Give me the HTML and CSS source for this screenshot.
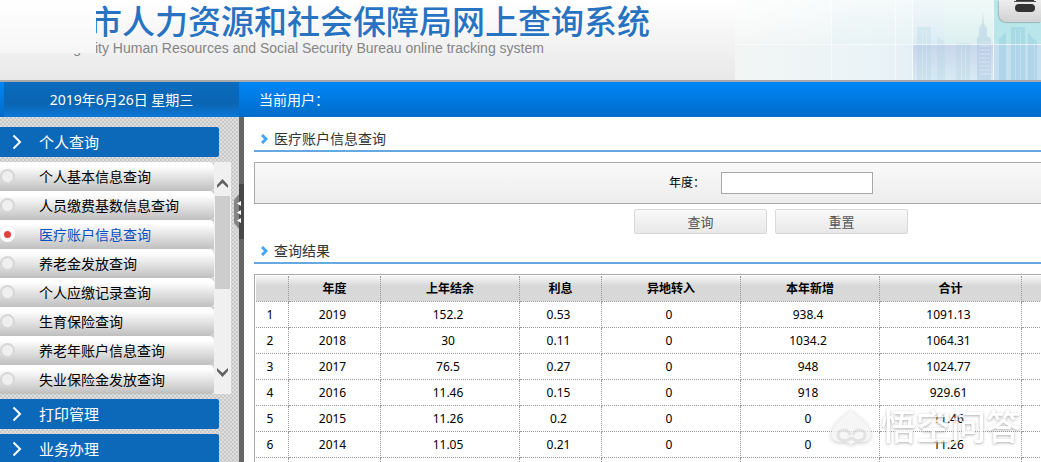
FILE: index.html
```html
<!DOCTYPE html>
<html lang="zh-CN">
<head>
<meta charset="utf-8">
<title>人力资源和社会保障局网上查询系统</title>
<link rel="stylesheet" href="styles.css">
</head>
<body>
<header class="banner">
  <div class="brand">
    <h1 class="brand-title">市人力资源和社会保障局网上查询系统</h1>
    <p class="brand-sub">Nantong City Human Resources and Social Security Bureau online tracking system</p>
    <span class="brand-mask"></span>
  </div>
  <svg class="skyline" width="306" height="80" viewBox="0 0 306 80" aria-hidden="true">
    <defs>
      <linearGradient id="sky" x1="0" x2="1" y1="0" y2="0">
        <stop offset="0" stop-color="#f6f9f8" stop-opacity=".5"/>
        <stop offset=".5" stop-color="#e8f3f5"/>
        <stop offset="1" stop-color="#d3eef2"/>
      </linearGradient>
      <linearGradient id="low" x1="0" x2="1" y1="0" y2="0">
        <stop offset="0" stop-color="#f2f5f4"/>
        <stop offset=".45" stop-color="#eaf3f7"/>
        <stop offset="1" stop-color="#d3e4f0"/>
      </linearGradient>
      <linearGradient id="fade" x1="0" x2="0" y1="0" y2="1">
        <stop offset="0" stop-color="#c9d6ec"/>
        <stop offset="1" stop-color="#d8eaf3"/>
      </linearGradient>
      <linearGradient id="glow" x1="0" x2="0" y1="0" y2="1">
        <stop offset="0" stop-color="#fff" stop-opacity=".6"/>
        <stop offset="1" stop-color="#fff" stop-opacity="0"/>
      </linearGradient>
    </defs>
    <rect width="306" height="44" fill="url(#sky)"/>
    <rect y="44" width="306" height="36" fill="url(#low)"/>
    <rect x="97" width="64" height="44" fill="#e6f1f5" opacity=".6"/>
    <rect x="178" width="31" height="44" fill="#dcecf4"/>
    <rect x="209" width="49" height="44" fill="#dcf0ef"/>
    <rect x="259" width="47" height="44" fill="#b9e6ea"/>
    <rect width="258" height="44" fill="url(#glow)"/>
    <rect x="178" y="45" width="80" height="35" fill="url(#fade)"/>
    <rect x="259" y="45" width="47" height="35" fill="#c5dff0"/>
    <g fill="#a9cfe0" opacity=".25">
      <path d="M182 80V27h14v53zM202 80V36l8 6v38zM221 80V43h14v37z"/>
    </g>
    <path d="M242 80V38l2-2v-8l3-4 1-12 1 12 3 4v8l4 2v42z" fill="#a5c4df" opacity=".4"/>
    <path d="M244 42h11M244 46h11M244 50h11M244 54h11M244 58h11M244 62h11M244 66h11M244 70h11M244 74h11" stroke="#dbe9f4" opacity=".8"/>
    <path d="M264 80V39l7-7v48zM276 80V27h14v53zM293 80V33l9 9v38z" fill="#87c5dc" opacity=".36"/>
    <path d="M187.500 30v50M191.500 30v50M226.500 46v34M230.500 46v34M280.500 30v50M285.500 30v50M299.500 42v38" stroke="#fff" opacity=".25"/>
    <path d="M0 44.500h306M96.500 0v80M160.500 0v80M177.500 0v80M258.500 0v80" stroke="#fff" opacity=".6"/>
  </svg>
  <button class="float-button" type="button" aria-label="工具">
    <svg width="22" height="12" viewBox="0 0 22 12" aria-hidden="true"><path d="M2 0h18v1H2z" fill="#333"/><path d="M0 1h22v1H0z" fill="#555"/><rect x="1" y="4" width="20" height="8" rx="4" fill="#333"/></svg>
  </button>
</header>

<div class="userbar">
  <div class="date">2019年6月26日 星期三</div>
  <div class="user">当前用户：</div>
</div>

<div class="page">
  <nav class="sidebar">
    <button class="group" type="button"><svg class="chevron" viewBox="0 0 10 16"><path d="M1.500 1.500 8 8l-6.500 6.500"/></svg>个人查询</button>
    <div class="submenu">
      <div class="links">
        <a class="link" href="#"><i class="dot"></i>个人基本信息查询</a>
        <a class="link" href="#"><i class="dot"></i>人员缴费基数信息查询</a>
        <a class="link current" href="#"><i class="dot"></i>医疗账户信息查询</a>
        <a class="link" href="#"><i class="dot"></i>养老金发放查询</a>
        <a class="link" href="#"><i class="dot"></i>个人应缴记录查询</a>
        <a class="link" href="#"><i class="dot"></i>生育保险查询</a>
        <a class="link" href="#"><i class="dot"></i>养老年账户信息查询</a>
        <a class="link" href="#"><i class="dot"></i>失业保险金发放查询</a>
      </div>
      <div class="scroll">
        <svg class="arrow" viewBox="0 0 11 9"><path d="M0 9V6l5.500-6L11 6v3L5.500 4z"/></svg>
        <span class="thumb"></span>
        <svg class="arrow" viewBox="0 0 11 9"><path d="M0 0v3l5.500 6L11 3V0L5.500 5z"/></svg>
      </div>
    </div>
    <button class="group" type="button"><svg class="chevron" viewBox="0 0 10 16"><path d="M1.500 1.500 8 8l-6.500 6.500"/></svg>打印管理</button>
    <button class="group" type="button"><svg class="chevron" viewBox="0 0 10 16"><path d="M1.500 1.500 8 8l-6.500 6.500"/></svg>业务办理</button>
  </nav>
  <div class="divider">
    <button class="collapse" type="button" aria-label="收起菜单">
      <svg width="10" height="55" viewBox="0 0 10 55"><path d="M5 10v35l-5-6V16z" fill="#858585"/><path d="M5 0h5v55H5z" fill="#484848"/><path d="M7 17v5l-4-2.500zM7 26v5l-4-2.500zM7 34v5l-4-2.500z" fill="#fff"/></svg>
    </button>
  </div>

  <main class="main">
    <div class="content">
      <h2 class="section"><svg class="mark" viewBox="0 0 7 10"><path d="M1 1l4 4-4 4"/></svg>医疗账户信息查询</h2>
      <form class="query">
        <div class="fields">
          <label class="field-label" for="year">年度：</label>
          <input class="field-input" id="year" type="text">
        </div>
        <div class="actions">
          <button class="action" type="button">查询</button>
          <button class="action" type="reset">重置</button>
        </div>
      </form>
      <h2 class="section"><svg class="mark" viewBox="0 0 7 10"><path d="M1 1l4 4-4 4"/></svg>查询结果</h2>
      <div class="result">
        <table class="grid">
          <colgroup><col class="c-index"><col class="c-year"><col class="c-wide"><col class="c-small"><col class="c-wide"><col class="c-wide"><col class="c-total"><col></colgroup>
          <thead><tr><th></th><th>年度</th><th>上年结余</th><th>利息</th><th>异地转入</th><th>本年新增</th><th>合计</th><th></th></tr></thead>
          <tbody>
            <tr><td>1</td><td>2019</td><td>152.2</td><td>0.53</td><td>0</td><td>938.4</td><td>1091.13</td><td></td></tr>
            <tr><td>2</td><td>2018</td><td>30</td><td>0.11</td><td>0</td><td>1034.2</td><td>1064.31</td><td></td></tr>
            <tr><td>3</td><td>2017</td><td>76.5</td><td>0.27</td><td>0</td><td>948</td><td>1024.77</td><td></td></tr>
            <tr><td>4</td><td>2016</td><td>11.46</td><td>0.15</td><td>0</td><td>918</td><td>929.61</td><td></td></tr>
            <tr><td>5</td><td>2015</td><td>11.26</td><td>0.2</td><td>0</td><td>0</td><td>11.46</td><td></td></tr>
            <tr><td>6</td><td>2014</td><td>11.05</td><td>0.21</td><td>0</td><td>0</td><td>11.26</td><td></td></tr>
            <tr><td></td><td></td><td></td><td></td><td></td><td></td><td></td><td></td></tr>
          </tbody>
        </table>
      </div>
    </div>
  </main>
</div>

<div class="watermark">
  <svg width="44" height="38" viewBox="0 0 44 38" aria-hidden="true"><path d="M22 1c3 6 13 10 17 18 5 8 3 14-5 15-5 0-8-1-12 3-4-4-7-3-12-3C2 33 0 27 5 19 9 11 19 7 22 1z" fill="#f4f4f4"/><path d="M22 29c-2 5-13 5-13-2 0-6 10-7 12 0 M23 29c2 5 13 5 13-2 0-6-10-7-12 0" fill="none" stroke="#dcdcdc" stroke-width="3"/></svg>
  <span>悟空问答</span>
</div>
</body>
</html>
```

FILE: styles.css
```css
* { box-sizing: border-box; }

body {
  display: flex;
  flex-direction: column;
  height: 100vh;
  margin: 0;
  overflow: hidden;
  background: #fff;
  color: #000;
  font: 12px/16px "Noto Sans", "Noto Sans CJK SC", sans-serif;
}

button, input { font: inherit; }

h1, h2, p { margin: 0; }

/* Banner */
.banner {
  position: relative;
  display: flex;
  flex: none;
  justify-content: space-between;
  height: 82px;
  overflow: hidden;
  border-bottom: 2px solid #aaa;
  background: linear-gradient(#fff, #e8e8e8);
}

.brand { position: relative; white-space: nowrap; }

.brand-title {
  padding-left: 89px;
  color: #2873c1;
  font-family: "Noto Sans CJK SC", sans-serif;
  font-size: 33px;
  font-weight: 500;
  line-height: 40px;
  text-shadow: 0 0 2px #fff, 1px 1px 2px #fff;
}

.brand-sub {
  padding-left: 28px;
  color: #858585;
  font-family: "Liberation Sans", Arial, sans-serif;
  font-size: 14px;
}

.brand-mask {
  position: absolute;
  top: 0;
  left: 0;
  width: 96px;
  height: 53px;
  background: linear-gradient(#fff, #f6f6f6);
}

.skyline { flex: none; }

.float-button {
  position: absolute;
  top: 0;
  right: 0;
  display: flex;
  justify-content: center;
  width: 42px;
  height: 22px;
  padding: 0 0 0 10px;
  border: 0;
  border-radius: 0 0 0 8px;
  background: linear-gradient(#eee, #d2d2d2);
  box-shadow: -1px 1px 1px #9bb;
}

/* Date and user bar */
.userbar {
  display: flex;
  flex: none;
  height: 35px;
  padding-left: 4px;
  background: linear-gradient(#0086f8, #006cc9);
  color: #fff;
  font-size: 14px;
  line-height: 35px;
}

.date {
  width: 235px;
  background: linear-gradient(#0b6cbf, #0a64b2 60%, #0c78d6);
  text-align: center;
}

.user { padding-left: 20px; }

/* Sidebar */
.page { display: flex; flex: 1; min-height: 0; }

.sidebar {
  display: flex;
  flex: none;
  flex-direction: column;
  gap: 5px;
  width: 239px;
  padding-top: 10px;
  overflow: hidden;
  background: repeating-conic-gradient(#c9c9c9 0 25%, #dedede 0 50%) 0 0 / 4px 4px;
}

.group {
  display: flex;
  flex: none;
  align-items: center;
  gap: 17px;
  width: 219px;
  height: 30px;
  padding: 0 12px;
  border: 0;
  border-radius: 0 2px 2px 0;
  background: #0c69ba;
  color: #fff;
  font-size: 15px;
}

.chevron {
  width: 10px;
  height: 16px;
  fill: none;
  stroke: #fff;
  stroke-width: 2;
}

.submenu { display: flex; flex: none; width: 231px; }

.links { flex: 1; }

.link {
  display: flex;
  align-items: center;
  gap: 24px;
  height: 29px;
  border-radius: 0 5px 5px 0;
  background: linear-gradient(#fff 15%, #bfbfbf);
  color: #000;
  font-size: 14px;
  text-decoration: none;
}

.dot {
  width: 15px;
  height: 15px;
  border: 2px solid #d6d6d6;
  border-radius: 50%;
  background: #efefef;
}

.current { color: #0a50c0; }

.current .dot { border: 4px solid #fff; background: #e83e3e; }

.scroll {
  display: flex;
  flex-direction: column;
  align-items: center;
  width: 17px;
  padding: 17px 1px;
  background: #f0f0f0;
}

.arrow { width: 11px; height: 9px; fill: #606060; }

.thumb {
  width: 15px;
  height: 93px;
  margin: 8px 0 auto;
  background: #cdcdcd;
}

.divider {
  position: relative;
  flex: none;
  width: 5px;
  background: repeating-conic-gradient(#606060 0 25%, #6c6c6c 0 50%) 0 0 / 4px 4px;
}

.collapse {
  position: absolute;
  top: 67px;
  right: 0;
  width: 10px;
  height: 55px;
  padding: 0;
  border: 0;
  background: none;
}

.collapse svg { display: block; }

/* Main area */
.main {
  flex: 1;
  min-width: 0;
  padding: 10px 0 0 10px;
  overflow: hidden;
}

.content { min-width: 1034px; }

.section {
  display: flex;
  align-items: center;
  gap: 6px;
  height: 25px;
  margin-bottom: 10px;
  padding-left: 7px;
  border-bottom: 2px solid #66a8e0;
  color: #333;
  font-size: 14px;
  font-weight: 400;
}

.mark {
  width: 7px;
  height: 10px;
  fill: none;
  stroke: #42a5f5;
  stroke-width: 3;
}

.query { margin-bottom: 5px; }

.fields {
  display: flex;
  align-items: center;
  justify-content: center;
  height: 42px;
  border: 1px solid #a9a9a9;
  background: linear-gradient(#f9f9f9, #ededed);
}

.field-label { width: 52px; }

.field-input {
  width: 152px;
  height: 22px;
  padding: 0 4px;
  border: 1px solid #a9a9a9;
  background: #fff;
}

.actions {
  display: flex;
  justify-content: center;
  gap: 8px;
  padding-top: 5px;
}

.action {
  width: 133px;
  height: 25px;
  padding: 0;
  border: 1px solid #d9d9d9;
  border-radius: 2px;
  background: linear-gradient(#f9f9f9, #e8e8e8);
  color: #555;
  font-size: 13px;
}

.result { padding: 1px; border: 1px solid #a9a9a9; }

.grid {
  width: 100%;
  border-collapse: separate;
  border-spacing: 0;
  table-layout: fixed;
}

.c-index { width: 33px; }
.c-year { width: 92px; }
.c-small { width: 82px; }
.c-wide { width: 139px; }
.c-total { width: 142px; }

.grid th, .grid td {
  height: 26px;
  padding: 0;
  border-right: 1px dotted #999;
  border-bottom: 1px dotted #999;
  text-align: center;
}

.grid td { padding-right: 4px; }

.grid th { background: linear-gradient(#f6f6f6, #d8d8d8 40%); }

/* Watermark */
.watermark {
  position: absolute;
  right: 20px;
  bottom: 15px;
  display: flex;
  align-items: center;
  gap: 8px;
  color: #fff;
  font-size: 35px;
  font-weight: 500;
  line-height: 40px;
  opacity: .8;
  text-shadow: 0 1px 3px #999;
  pointer-events: none;
}

.watermark svg { filter: drop-shadow(0 1px 2px #bbb); }
```
